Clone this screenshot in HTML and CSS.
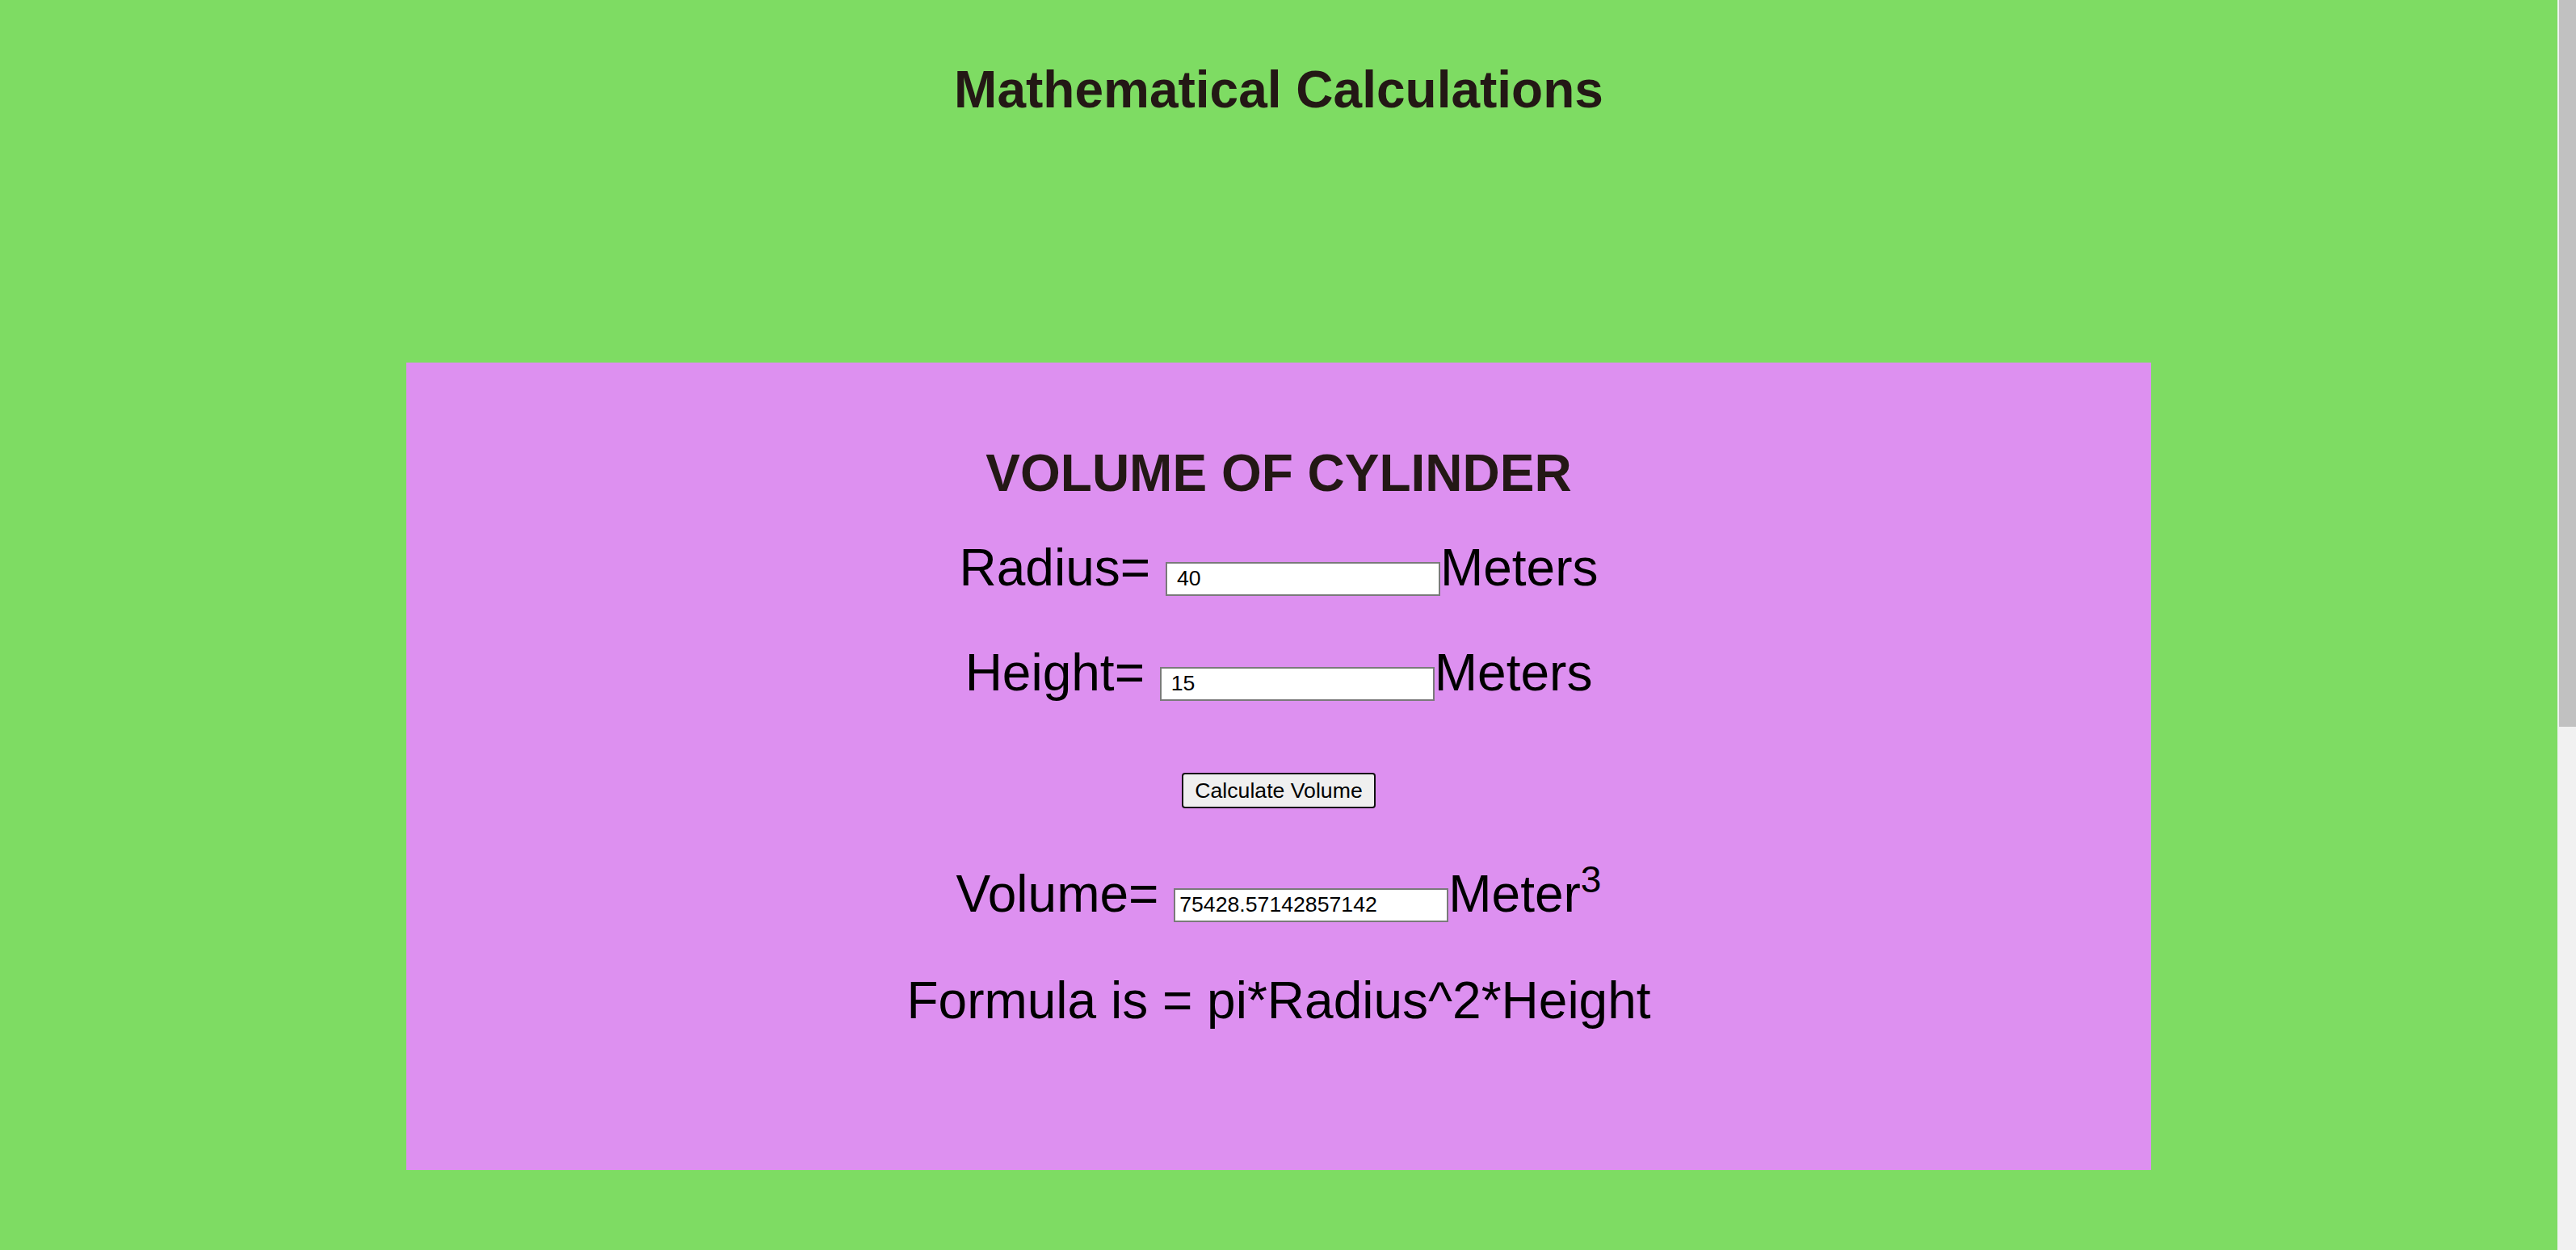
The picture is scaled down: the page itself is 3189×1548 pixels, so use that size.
FILE: index.html
```html
<!DOCTYPE html>
<html lang="en">
<head>
<meta charset="utf-8">
<title>Mathematical Calculations</title>
<link rel="stylesheet" href="styles.css">
</head>
<body>
<div class="page">
  <header class="top">
    <h1 class="title">Mathematical Calculations</h1>
  </header>
  <main class="card">
    <h2 class="card-title">VOLUME OF CYLINDER</h2>
    <div class="row row-radius">Radius= <input class="field field-in" type="text" value="40">Meters</div>
    <div class="row row-height">Height= <input class="field field-in" type="text" value="15">Meters</div>
    <div class="actions"><button class="btn" type="button">Calculate Volume</button></div>
    <div class="row row-volume">Volume= <input class="field field-out" type="text" value="75428.57142857142">Meter<sup class="sup">3</sup></div>
    <div class="row row-formula">Formula is = pi*Radius^2*Height</div>
  </main>
</div>
<div class="scrollbar" aria-hidden="true"><div class="scrollbar-thumb"></div></div>
</body>
</html>
```
FILE: styles.css
```css
html, body {
  margin: 0;
  padding: 0;
}

body {
  background: #7edc63;
  color: #000;
  font-family: "Liberation Sans", Arial, sans-serif;
  padding-right: 23px;
  overflow: hidden;
}

.page {
  min-height: 1548px;
}

.scrollbar {
  position: fixed;
  top: 0;
  right: 0;
  width: 23px;
  height: 100vh;
  background: #f1f1f1;
}

.scrollbar-thumb {
  margin-left: 2px;
  height: 900px;
  background: #c1c1c1;
}

.top {
  height: 449px;
  padding-top: 79px;
  box-sizing: border-box;
  text-align: center;
}

.title {
  margin: 0;
  font-size: 64px;
  line-height: 64px;
  font-weight: bold;
  color: #231815;
}

.card {
  display: block;
  width: 2160px;
  height: 1000px;
  margin: 0 auto;
  padding-top: 105px;
  box-sizing: border-box;
  background: #dd90f0;
  text-align: center;
  font-size: 64px;
  line-height: 64px;
}

.card-title {
  margin: 0;
  font-size: 64px;
  line-height: 64px;
  font-weight: bold;
  color: #231815;
}

.row {
  height: 64px;
  white-space: nowrap;
}

.row-radius { margin-top: 53px; }
.row-height { margin-top: 66px; }
.row-volume { margin-top: 74px; }
.row-formula { margin-top: 68px; }

.field {
  width: 340px;
  height: 42px;
  box-sizing: border-box;
  margin: 0 0 0 1px;
  border: 2px solid #7a7a7a;
  background: #fff;
  color: #000;
  font-family: "Liberation Sans", Arial, sans-serif;
  font-size: 26.67px;
  vertical-align: baseline;
  outline: none;
}

.field-in {
  padding: 0 0 0 12px;
}

.field-out {
  padding: 0 0 0 5px;
}

.actions {
  display: flex;
  justify-content: center;
  margin-top: 92px;
  height: 44px;
}

.btn {
  height: 44px;
  width: 240px;
  box-sizing: border-box;
  padding: 0 12px;
  border: 2px solid #111;
  border-radius: 4px;
  background: #efefef;
  color: #000;
  font-family: "Liberation Sans", Arial, sans-serif;
  font-size: 26.67px;
  line-height: 1;
}

.sup {
  font-size: 46px;
  line-height: 0;
  vertical-align: 24px;
}
```
